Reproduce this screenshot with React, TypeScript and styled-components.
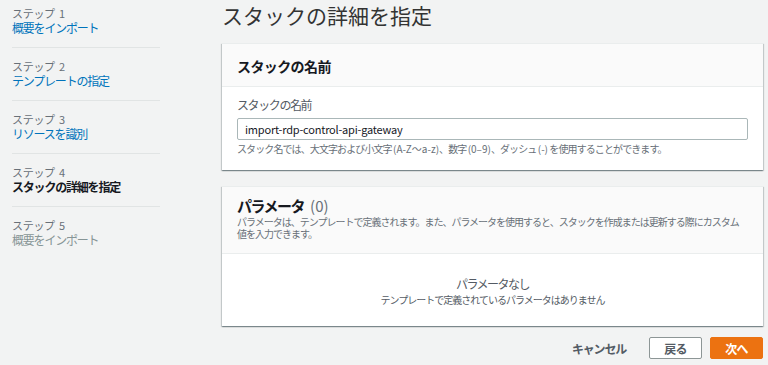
import styled, { createGlobalStyle } from "styled-components";

const GlobalStyle = createGlobalStyle`
  body {
    margin: 0;
    background: #f2f3f3;
    font-family: "Noto Sans CJK JP", "Noto Sans", sans-serif;
    color: #16191f;
  }
`;

const steps = [
  { label: "ステップ 1", title: "概要をインポート", state: "link" },
  { label: "ステップ 2", title: "テンプレートの指定", state: "link" },
  { label: "ステップ 3", title: "リソースを識別", state: "link" },
  { label: "ステップ 4", title: "スタックの詳細を指定", state: "current" },
  { label: "ステップ 5", title: "概要をインポート", state: "disabled" },
];

const App = () => {
  return (
    <>
      <GlobalStyle />
      <Page>
        <Nav>
          {steps.map((s, i) => (
            <Step key={s.label} $last={i === steps.length - 1}>
              <StepLabel>{s.label}</StepLabel>
              <StepTitle $state={s.state}>{s.title}</StepTitle>
            </Step>
          ))}
        </Nav>
        <Main>
          <Heading>スタックの詳細を指定</Heading>

          <Card>
            <CardHeader>
              <CardTitle>スタックの名前</CardTitle>
            </CardHeader>
            <CardBody>
              <FieldLabel>スタックの名前</FieldLabel>
              <Input defaultValue="import-rdp-control-api-gateway" />
              <Help>
                スタック名では、大文字および小文字 <Latin>(A-Z〜a-z)</Latin>、数字{" "}
                <Latin>(0–9)</Latin>、ダッシュ <Latin>(-)</Latin> を使用することができます。
              </Help>
            </CardBody>
          </Card>

          <Card $spaced>
            <CardHeader $tall>
              <SectionTitle>
                パラメータ<Count>(0)</Count>
              </SectionTitle>
              <Description>
                パラメータは、テンプレートで定義されます。また、パラメータを使用すると、スタックを作成または更新する際にカスタム
                <br />
                値を入力できます。
              </Description>
            </CardHeader>
            <EmptyBody>
              <EmptyTitle>パラメータなし</EmptyTitle>
              <EmptyText>テンプレートで定義されているパラメータはありません</EmptyText>
            </EmptyBody>
          </Card>

          <Actions>
            <CancelButton>キャンセル</CancelButton>
            <Button>戻る</Button>
            <Button $primary>次へ</Button>
          </Actions>
        </Main>
      </Page>
    </>
  );
};

const Page = styled.div`
  display: flex;
  min-height: 365px;
`;

const Nav = styled.nav`
  flex: none;
  width: 148px;
  padding: 6px 0 0 12px;
`;

const Step = styled.div<{ $last?: boolean }>`
  padding-bottom: 11px;
  margin-bottom: 11px;
  border-bottom: ${(p) => (p.$last ? "none" : "1px solid #e1e4e4")};
`;

const StepLabel = styled.div`
  font-size: 11px;
  line-height: 14px;
  color: #687078;
  letter-spacing: -0.3px;
  word-spacing: 2px;
`;

const StepTitle = styled.div<{ $state: string }>`
  font-size: 12px;
  line-height: 16px;
  letter-spacing: -1.2px;
  color: ${(p) =>
    p.$state === "link" ? "#0073bb" : p.$state === "current" ? "#16191f" : "#879596"};
  font-weight: ${(p) => (p.$state === "current" ? 700 : 400)};
`;

const Main = styled.main`
  flex: none;
  width: 541px;
  margin-left: 62px;
`;

const Heading = styled.h1`
  margin: 0 0 15px;
  padding-top: 3px;
  font-size: 21px;
  line-height: 25px;
  font-weight: 400;
  color: #333;
`;

const Card = styled.section<{ $spaced?: boolean }>`
  background: #fff;
  margin-top: ${(p) => (p.$spaced ? "16px" : "0")};
  box-shadow: 0 1px 1px 0 rgba(0, 28, 36, 0.3), 1px 1px 1px 0 rgba(0, 28, 36, 0.15),
    -1px 1px 1px 0 rgba(0, 28, 36, 0.15);
  border-top: 1px solid #eaeded;
`;

const CardHeader = styled.div<{ $tall?: boolean }>`
  background: #fafafa;
  border-bottom: 1px solid #eaeded;
  padding: ${(p) => (p.$tall ? "9px 15px 13px" : "12px 15px 10px")};
`;

const CardTitle = styled.h2`
  margin: 0;
  font-size: 14px;
  line-height: 20px;
  font-weight: 700;
  letter-spacing: -0.6px;
  color: #16191f;
`;

const CardBody = styled.div`
  padding: 10px 15px 14px;
`;

const FieldLabel = styled.label`
  display: block;
  font-size: 12px;
  line-height: 15px;
  letter-spacing: -1.4px;
  color: #545b64;
`;

const Input = styled.input`
  display: block;
  box-sizing: border-box;
  width: 511px;
  height: 22px;
  margin-top: 6px;
  padding: 0 7px;
  border: 1px solid #aab7b8;
  border-radius: 2px;
  font-family: "Noto Sans CJK JP", sans-serif;
  font-size: 11px;
  letter-spacing: -0.2px;
  color: #16191f;
  outline: none;
`;

const Help = styled.div`
  margin-top: 2px;
  font-size: 10px;
  line-height: 14px;
  letter-spacing: -0.9px;
  color: #687078;
`;

const Latin = styled.span`
  letter-spacing: 0;
`;

const SectionTitle = styled.h2`
  margin: 0;
  font-size: 15px;
  line-height: 20px;
  font-weight: 700;
  letter-spacing: -1.5px;
  color: #16191f;
`;

const Count = styled.span`
  margin-left: 6px;
  font-weight: 400;
  letter-spacing: 0;
  color: #687078;
`;

const Description = styled.p`
  margin: 0;
  font-size: 10px;
  line-height: 12px;
  letter-spacing: -1px;
  color: #687078;
  white-space: nowrap;
`;

const EmptyBody = styled.div`
  padding: 22px 15px 19px;
  text-align: center;
`;

const EmptyTitle = styled.div`
  font-size: 12px;
  line-height: 16px;
  letter-spacing: -1.5px;
  color: #545b64;
`;

const EmptyText = styled.div`
  margin-top: 1px;
  font-size: 10px;
  line-height: 14px;
  letter-spacing: -1px;
  color: #545b64;
`;

const Actions = styled.div`
  display: flex;
  justify-content: flex-end;
  align-items: center;
  gap: 8px;
  margin-top: 11px;
`;

const CancelButton = styled.button`
  border: none;
  background: none;
  padding: 0;
  margin-right: 15px;
  font-family: inherit;
  font-size: 12px;
  font-weight: 700;
  letter-spacing: -1.2px;
  color: #545b64;
  cursor: pointer;
`;

const Button = styled.button<{ $primary?: boolean }>`
  box-sizing: border-box;
  width: 53px;
  height: 22px;
  padding: 0;
  border: 1px solid ${(p) => (p.$primary ? "#ec7211" : "#8d9696")};
  border-radius: 2px;
  background: ${(p) => (p.$primary ? "#ec7211" : "#fff")};
  color: ${(p) => (p.$primary ? "#fff" : "#545b64")};
  font-family: inherit;
  font-size: 12px;
  font-weight: 700;
  letter-spacing: -0.8px;
  cursor: pointer;
`;

export default App;
